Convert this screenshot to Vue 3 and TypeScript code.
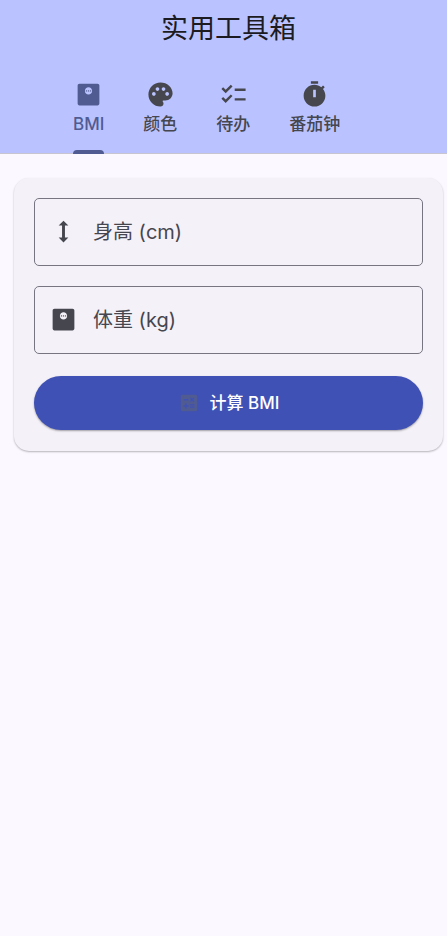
<script setup lang="ts">
import { ref } from 'vue'

interface Tab {
  id: string
  label: string
  icon: string
}

const icons = {
  scale:
    'M19.5 3h-15C3.67 3 3 3.67 3 4.5v15c0 .83.67 1.5 1.5 1.5h15c.83 0 1.5-.67 1.5-1.5v-15c0-.83-.67-1.5-1.5-1.5zm-7.5 9c-1.66 0-3-1.34-3-3s1.34-3 3-3 3 1.34 3 3-1.34 3-3 3zM10.3 8.4a.6.6 0 1 0 0 1.2.6.6 0 0 0 0-1.2zM12 8.4a.6.6 0 1 0 0 1.2.6.6 0 0 0 0-1.2zM13.7 8.4a.6.6 0 1 0 0 1.2.6.6 0 0 0 0-1.2z',
  palette:
    'M12 2C6.49 2 2 6.49 2 12s4.49 10 10 10c1.38 0 2.5-1.12 2.5-2.5 0-.61-.23-1.2-.64-1.67-.08-.1-.13-.21-.13-.33 0-.28.22-.5.5-.5H16c3.31 0 6-2.69 6-6 0-4.96-4.49-9-10-9zM6.5 13c-.83 0-1.5-.67-1.5-1.5S5.67 10 6.5 10s1.5.67 1.5 1.5S7.33 13 6.5 13zm3-4C8.67 9 8 8.33 8 7.5S8.67 6 9.5 6s1.5.67 1.5 1.5S10.33 9 9.5 9zm5 0c-.83 0-1.5-.67-1.5-1.5S13.67 6 14.5 6s1.5.67 1.5 1.5S15.33 9 14.5 9zm3 4c-.83 0-1.5-.67-1.5-1.5s.67-1.5 1.5-1.5 1.5.67 1.5 1.5-.67 1.5-1.5 1.5z',
  checklist:
    'M22 7h-9v2h9V7zm0 8h-9v2h9v-2zM5.54 11 2 7.46l1.41-1.41 2.12 2.12 4.24-4.24 1.41 1.41L5.54 11zm0 8L2 15.46l1.41-1.41 2.12 2.12 4.24-4.24 1.41 1.41L5.54 19z',
  timer:
    'M9 1h6v2H9zM19.03 7.39l1.42-1.42c-.43-.51-.9-.99-1.41-1.41l-1.42 1.42C16.07 4.74 14.12 4 12 4c-4.97 0-9 4.03-9 9s4.02 9 9 9 9-4.03 9-9c0-2.12-.74-4.07-1.97-5.61zM13.1 14.2h-2.2V8h2.2v6.2z',
  height: 'M13.2 6.99H16L12 3 8 6.99h2.8v10.02H8L12 21l4-3.99h-2.8z',
  calculate:
    'M19 3H5c-1.1 0-2 .9-2 2v14c0 1.1.9 2 2 2h14c1.1 0 2-.9 2-2V5c0-1.1-.9-2-2-2zm-5.97 4.06L14.09 6l1.41 1.41L16.91 6l1.06 1.06-1.41 1.41 1.41 1.41-1.06 1.06-1.41-1.4-1.41 1.41-1.06-1.06 1.41-1.41-1.41-1.42zm-6.78.66h5v1.5h-5v-1.5zM11.5 16h-2v2H8v-2H6v-1.5h2v-2h1.5v2h2V16zm6.5 1.25h-5v-1.5h5v1.5zm0-2.5h-5v-1.5h5v1.5z',
}

const tabs: Tab[] = [
  { id: 'bmi', label: 'BMI', icon: icons.scale },
  { id: 'color', label: '颜色', icon: icons.palette },
  { id: 'todo', label: '待办', icon: icons.checklist },
  { id: 'pomodoro', label: '番茄钟', icon: icons.timer },
]

const active = ref('bmi')
const height = ref('')
const weight = ref('')
</script>

<template>
  <div class="app">
    <header class="bar">
      <h1 class="title">实用工具箱</h1>
      <nav class="tabs" role="tablist">
        <button
          v-for="tab in tabs"
          :key="tab.id"
          type="button"
          role="tab"
          class="tab"
          :class="{ active: active === tab.id }"
          :aria-selected="active === tab.id"
          @click="active = tab.id"
        >
          <svg class="icon" viewBox="0 0 24 24" aria-hidden="true"><path :d="tab.icon" /></svg>
          <span>{{ tab.label }}</span>
        </button>
      </nav>
    </header>

    <main class="content">
      <form class="card" @submit.prevent>
        <label class="field" for="height">
          <svg class="icon" viewBox="0 0 24 24" aria-hidden="true"><path :d="icons.height" /></svg>
          <input id="height" v-model="height" inputmode="decimal" placeholder="身高 (cm)" aria-label="身高 (cm)" />
        </label>
        <label class="field" for="weight">
          <svg class="icon" viewBox="0 0 24 24" aria-hidden="true"><path :d="icons.scale" /></svg>
          <input id="weight" v-model="weight" inputmode="decimal" placeholder="体重 (kg)" aria-label="体重 (kg)" />
        </label>
        <button type="submit" class="submit">
          <svg class="submit-icon" viewBox="0 0 24 24" aria-hidden="true"><path :d="icons.calculate" /></svg>
          <span>计算 BMI</span>
        </button>
      </form>
    </main>
  </div>
</template>

<style>
body {
  background: #fbf8ff;
}
</style>

<style scoped>
.app {
  min-height: 100vh;
  background: #fbf8ff;
  color: #1b1b21;
  font-family: Inter, "Noto Sans CJK SC", sans-serif;
}

.bar {
  background: #bac3ff;
  box-shadow: inset 0 -1px 0 #c7c5d0;
}

.title {
  margin: 0;
  padding: 9px 0 7px 10px;
  font-size: 27px;
  line-height: 40px;
  font-weight: 400;
  text-align: center;
}

.tabs {
  display: flex;
  gap: 39px;
  padding: 0 73px;
}

.tab {
  display: flex;
  flex-direction: column;
  align-items: center;
  height: 98px;
  padding: 24px 0 0;
  border: 0;
  background: none;
  color: #46464f;
  font-family: inherit;
  font-size: 17px;
  line-height: 24px;
  font-weight: 500;
  white-space: nowrap;
  cursor: pointer;
}

.tab span {
  margin-top: 3px;
}

.tab.active {
  color: #505b92;
}

.tab.active::after {
  content: "";
  width: 100%;
  height: 4px;
  margin-top: auto;
  border-radius: 4px 4px 0 0;
  background: #505b92;
}

.icon {
  flex: none;
  width: 29px;
  height: 29px;
  fill: currentColor;
}

.content {
  padding: 24px 4px 24px 14px;
}

.card {
  display: flex;
  flex-direction: column;
  gap: 20px;
  padding: 20px 20px 21px;
  border-radius: 15px;
  background: #f4f1f9;
  box-shadow: 0 1px 2px rgba(0, 0, 0, 0.28);
}

.field {
  box-sizing: border-box;
  display: flex;
  align-items: center;
  gap: 15px;
  height: 68px;
  padding: 0 14px 1px;
  border: 1px solid #777680;
  border-radius: 5px;
  color: #46464f;
}

.field input {
  flex: 1;
  min-width: 0;
  padding: 0;
  border: 0;
  outline: 0;
  background: none;
  color: #1b1b21;
  font-family: inherit;
  font-size: 20px;
  line-height: 30px;
}

.field input::placeholder {
  color: #46464f;
  opacity: 1;
}

.submit {
  display: flex;
  align-items: center;
  justify-content: center;
  gap: 10px;
  height: 54px;
  margin-top: 2px;
  padding: 0 20px;
  border: 0;
  border-radius: 27px;
  background: #3f51b5;
  box-shadow: 0 1px 2px rgba(0, 0, 0, 0.35);
  color: #fff;
  font-family: inherit;
  font-size: 17px;
  line-height: 24px;
  font-weight: 500;
  cursor: pointer;
}

.submit-icon {
  width: 22px;
  height: 22px;
  fill: #505b92;
}
</style>
